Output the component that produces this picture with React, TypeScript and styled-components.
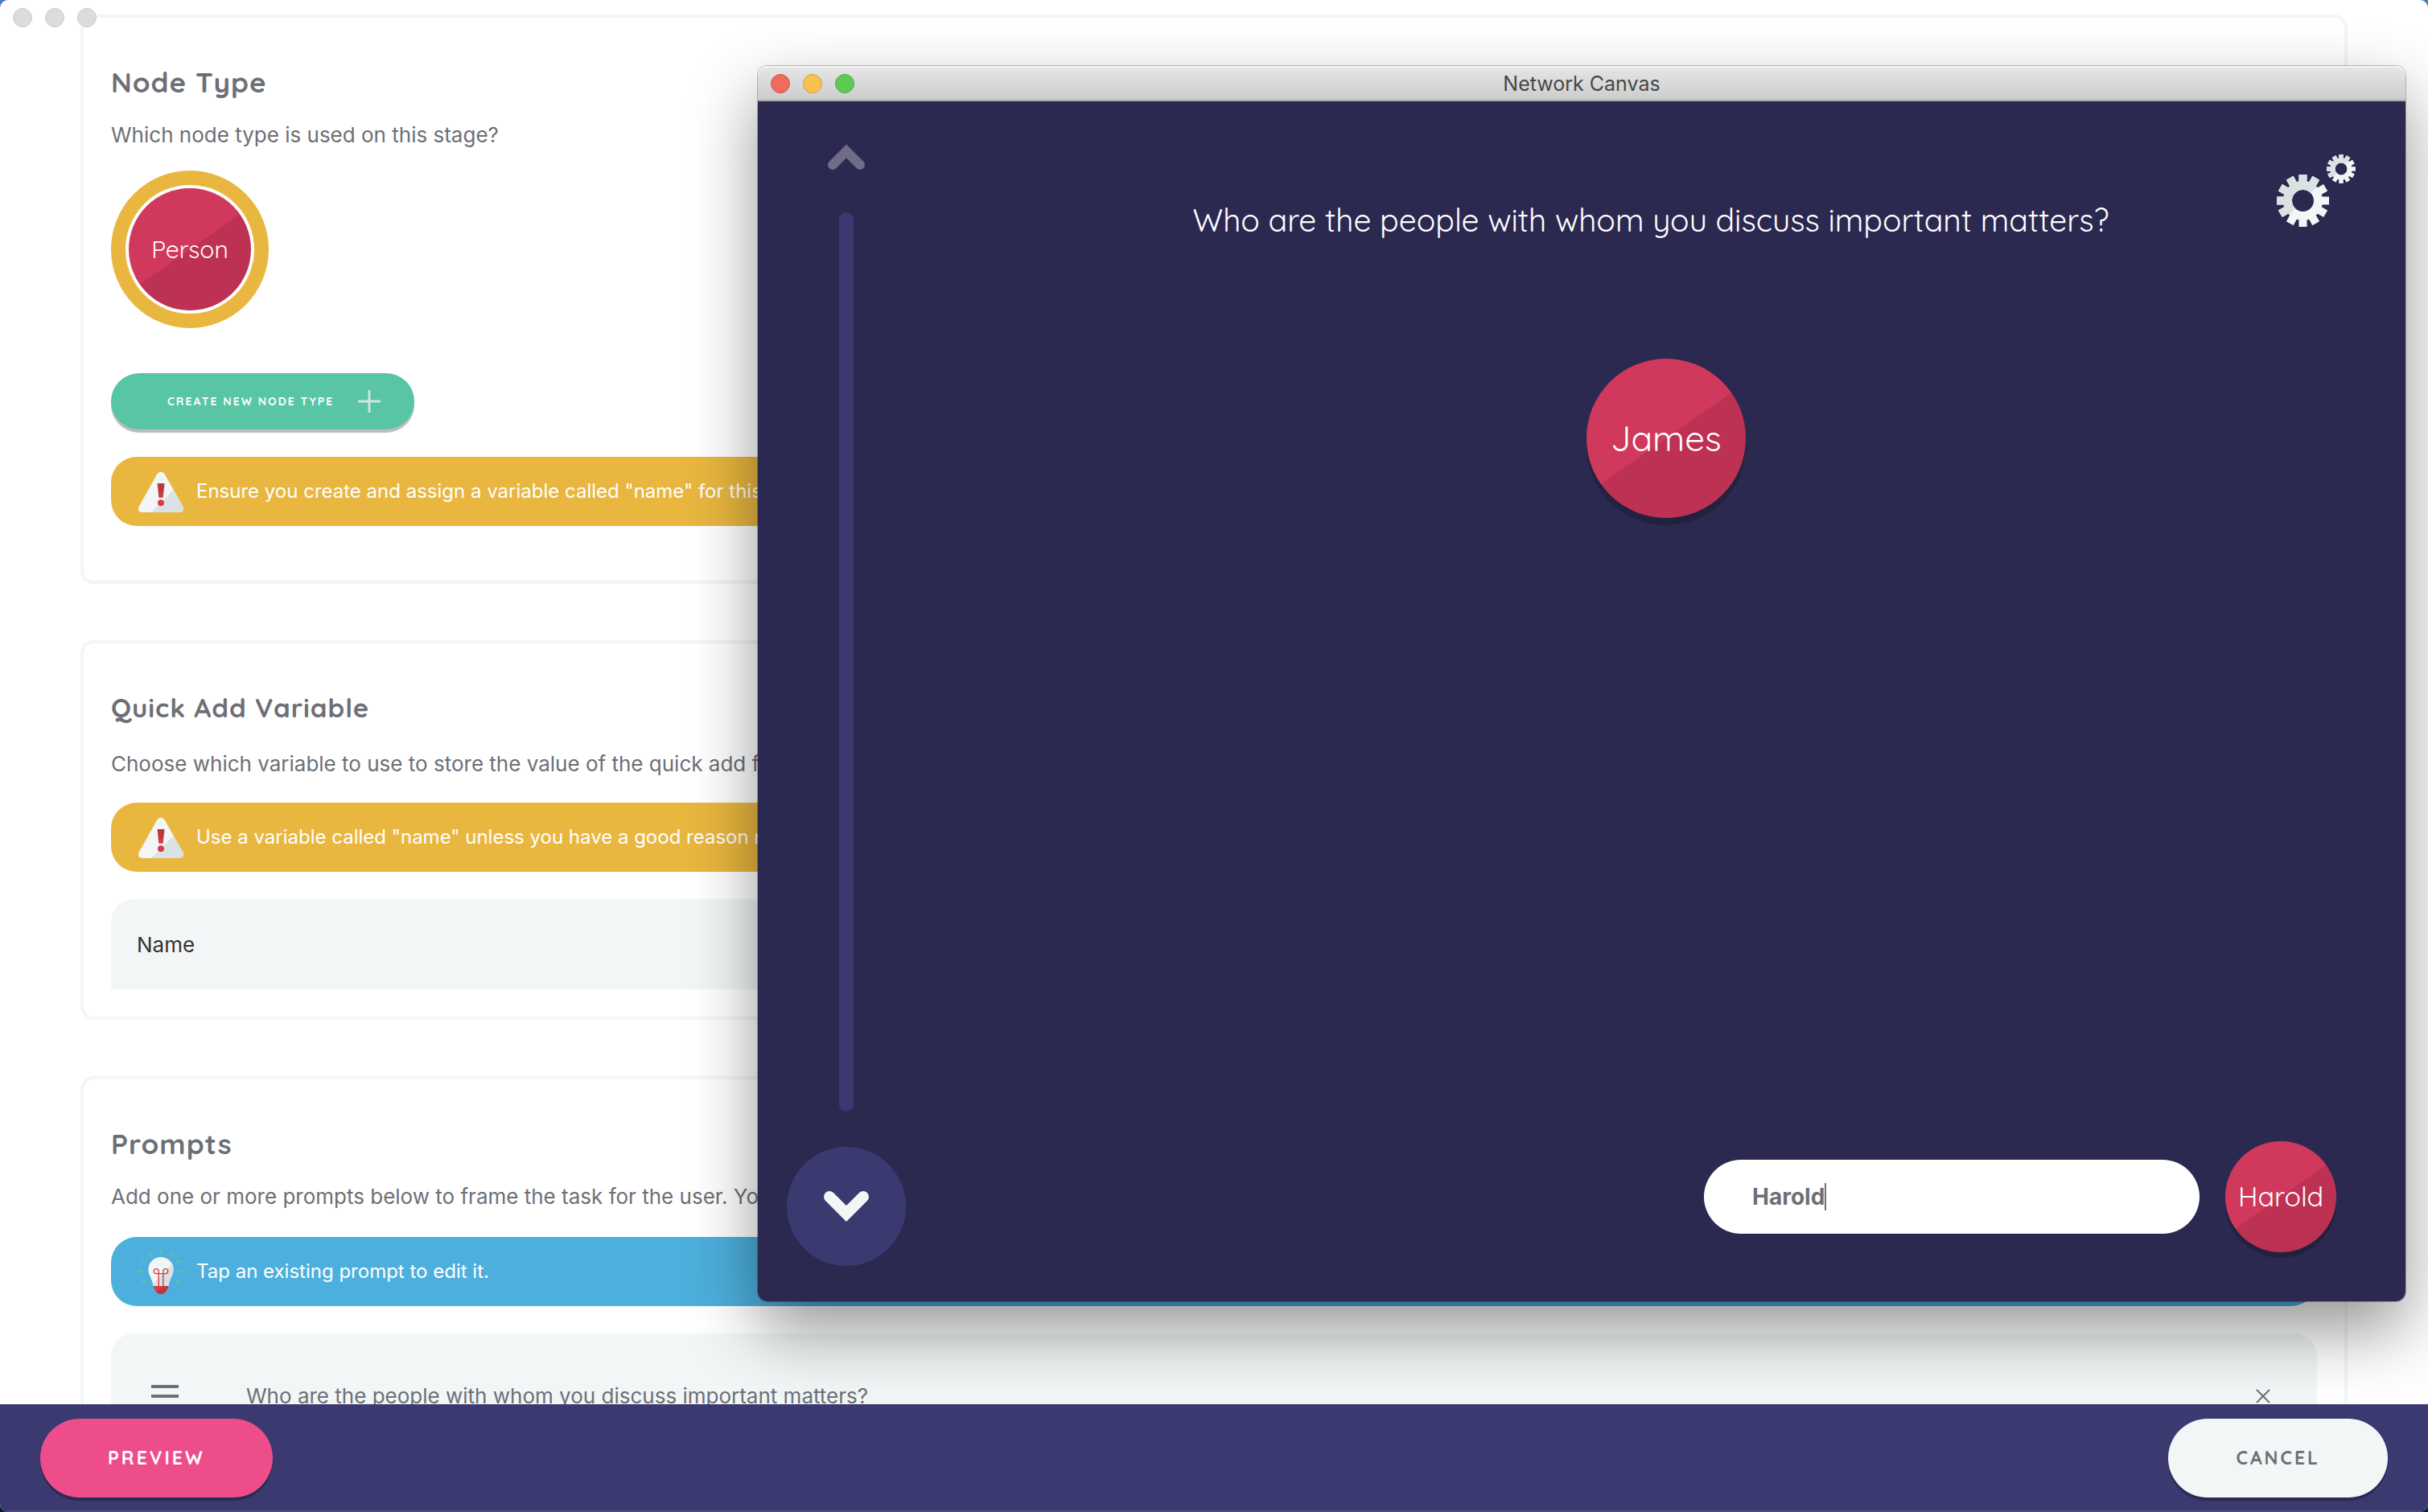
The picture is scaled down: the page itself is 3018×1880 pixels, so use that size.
import React, { useState } from 'react';
import styled, { createGlobalStyle } from 'styled-components';

const body = `Inter, "Liberation Sans", sans-serif`;
const display = `Quicksand, Lato, sans-serif`;

const color = {
  text: '#6d6f76',
  platinum: '#f2f6f7',
  platinumDark: '#dbe2e4',
  mustard: '#e9b73f',
  sky: '#4dafdd',
  green: '#58c5a4',
  pink: '#ed4d8a',
  navy: '#3b3a70',
  navyDark: '#2c2951',
  red: '#d63d47',
  redDark: '#bf363e',
};

const GlobalStyle = createGlobalStyle`
  *, *::before, *::after { box-sizing: border-box; }
  body {
    margin: 0;
    background: linear-gradient(#4a7db8, #0a1a30);
    color: ${color.text};
    font-family: ${body};
    font-size: 26px;
    line-height: 40px;
  }
  h1, h2, p, ul { margin: 0; padding: 0; font-weight: inherit; }
  button, input { font: inherit; color: inherit; border: 0; padding: 0; background: none; outline: none; }
  button { cursor: pointer; }
  svg { display: block; flex: none; }
`;

const AppWindow = styled.div`
  position: relative;
  display: flex;
  flex-direction: column;
  height: 100vh;
  overflow: hidden;
  border-radius: 10px;
  background: #fff;
`;

const Lights = styled.div`
  display: flex;
  gap: 16px;
`;

const Light = styled.button<{ $fill: string; $edge: string }>`
  width: 24px;
  height: 24px;
  border: 1px solid ${(p) => p.$edge};
  border-radius: 50%;
  background: ${(p) => p.$fill};
`;

const IdleLights = styled(Lights)`
  position: absolute;
  z-index: 1;
  top: 10px;
  left: 16px;
`;

const Main = styled.main`
  display: flex;
  flex: 1;
  flex-direction: column;
  gap: 70px;
  min-height: 0;
  overflow: hidden;
  padding: 18px 100px 0;
`;

const Card = styled.section<{ $foot?: number }>`
  display: flex;
  flex: none;
  flex-direction: column;
  padding: 34px 34px ${(p) => p.$foot ?? 34}px;
  border: 4px solid ${color.platinum};
  border-radius: 16px;
`;

const Heading = styled.h2<{ $size?: number }>`
  margin-top: 24px;
  font: 700 ${(p) => p.$size ?? 35}px/44px ${display};
  letter-spacing: 1px;
`;

const Intro = styled.p<{ $before?: number; $after?: number }>`
  margin: ${(p) => p.$before ?? 24}px 0 ${(p) => p.$after ?? 24}px;
`;

const Node = styled.span<{ $size: number; $text: number; $drop?: number }>`
  display: flex;
  align-items: center;
  justify-content: center;
  width: ${(p) => p.$size}px;
  height: ${(p) => p.$size}px;
  border-radius: 50%;
  background: linear-gradient(145deg, #d0395c 50%, #bd3153 50%);
  box-shadow: 0 ${(p) => p.$drop ?? 0}px 0 #23213f;
  color: #fff;
  font-family: ${display};
  font-size: ${(p) => p.$text}px;
`;

const NodeChoice = styled.button`
  align-self: flex-start;
  padding: 4px;
  border: 18px solid ${color.mustard};
  border-radius: 50%;
`;

const CreateButton = styled.button`
  display: flex;
  align-items: center;
  align-self: flex-start;
  gap: 30px;
  height: 70px;
  margin: 56px 0 34px;
  padding: 0 42px 0 70px;
  border-radius: 35px;
  background: ${color.green};
  box-shadow: 0 4px 0 #bdbdbd;
  color: #fff;
  font: 700 14px/20px ${display};
  letter-spacing: 2px;
  text-transform: uppercase;
`;

const Tip = styled.div<{ $tone: string }>`
  display: flex;
  flex: none;
  align-items: center;
  gap: 16px;
  height: 86px;
  padding: 0 34px;
  border-radius: 32px;
  background: ${(p) => p.$tone};
  color: #fff;
  font-size: 24px;
`;

const VariableInput = styled.input`
  width: 100%;
  height: 112px;
  margin-top: 34px;
  padding: 0 32px;
  border-radius: 28px 28px 0 0;
  background: ${color.platinum};
  color: #333;
`;

const PromptList = styled.ul`
  margin-top: 34px;
  border-radius: 28px;
  background: ${color.platinum};
  list-style: none;
`;

const PromptRow = styled.li`
  display: flex;
  align-items: center;
  height: 156px;
  padding: 0 58px 0 50px;
`;

const PromptText = styled.button`
  flex: 1;
  margin-left: 84px;
  text-align: left;
`;

const Footer = styled.footer`
  display: flex;
  align-items: center;
  justify-content: space-between;
  flex: none;
  height: 134px;
  padding: 0 50px;
  background: ${color.navy};
  box-shadow: inset 0 -2px 0 #4b4a7e;
`;

const PillButton = styled.button<{ $fill: string; $ink: string }>`
  height: 98px;
  padding: 0 84px;
  border-radius: 49px;
  background: ${(p) => p.$fill};
  box-shadow: 0 4px 0 #2a2a55;
  color: ${(p) => p.$ink};
  font: 700 23px/28px ${display};
  letter-spacing: 3px;
  text-transform: uppercase;
`;

const PreviewWindow = styled.div`
  position: absolute;
  z-index: 2;
  top: 82px;
  right: 28px;
  bottom: 262px;
  left: 942px;
  display: flex;
  flex-direction: column;
  border-radius: 12px;
  box-shadow: 0 0 0 1px rgba(0, 0, 0, 0.25), 0 36px 84px rgba(0, 0, 0, 0.42);
`;

const TitleBar = styled.header`
  display: grid;
  grid-template-columns: 1fr auto 1fr;
  align-items: center;
  height: 44px;
  padding: 2px 16px 0;
  border-bottom: 2px solid #adadad;
  border-radius: 12px 12px 0 0;
  background: linear-gradient(#e6e6e6, #cdcdcd);
  box-shadow: inset 0 2px 0 #f4f4f4;
  color: #474747;
  font-size: 25px;
`;

const Interview = styled.div`
  position: relative;
  display: flex;
  flex: 1;
  min-height: 0;
  border-radius: 0 0 12px 12px;
  background: ${color.navyDark};
  color: #fff;
`;

const Timeline = styled.nav`
  display: flex;
  flex-direction: column;
  align-items: center;
  padding: 54px 0 44px 36px;
`;

const Track = styled.div`
  flex: 1;
  width: 18px;
  margin: 53px 0 44px;
  border-radius: 9px;
  background: ${color.navy};
`;

const NextButton = styled.button`
  display: flex;
  align-items: center;
  justify-content: center;
  width: 148px;
  height: 148px;
  border-radius: 50%;
  background: ${color.navy};
`;

const Stage = styled.div`
  display: flex;
  flex: 1;
  flex-direction: column;
  align-items: center;
  margin-right: 12px;
  padding: 124px 0 61px;
`;

const Question = styled.h1`
  font: 400 39px/48px ${display};
`;

const NodeList = styled.ul`
  flex: 1;
  margin-top: 148px;
  padding-left: 38px;
  list-style: none;
`;

const QuickAdd = styled.form`
  display: flex;
  align-items: center;
  align-self: flex-end;
  gap: 32px;
  margin-right: 74px;
`;

const QuickField = styled.label`
  display: flex;
  align-items: center;
  width: 616px;
  height: 92px;
  padding: 0 60px;
  border-radius: 46px;
  background: #fff;
  color: ${color.text};
  font-size: 28px;
  font-weight: 700;
  cursor: text;
`;

const QuickInput = styled.input`
  field-sizing: content;
  caret-color: transparent;
`;

const Caret = styled.span`
  width: 2px;
  height: 34px;
  background: ${color.text};
`;

const SettingsButton = styled.button`
  position: absolute;
  top: 66px;
  right: 62px;
`;

const WarningIcon = () => (
  <svg width="56" height="56" viewBox="0 0 56 56" aria-hidden="true">
    <clipPath id="sign">
      <path d="M23.4 6.2Q28 .8 32.6 6.2L55.2 46.6Q58 53.4 51 54H5Q-2 53.4.8 46.6Z" />
    </clipPath>
    <g clipPath="url(#sign)">
      <path d="M0 0h56v56H0z" fill={color.platinum} />
      <path d="M44 26L16 54v2h42V26z" fill={color.platinumDark} />
    </g>
    <path d="M23.6 18h8.8l-1.8 17.6h-5.2z" fill={color.redDark} />
    <path d="M32.4 18l-1.8 17.6h-5.2l-.2-2.4L32 26z" fill={color.red} />
    <circle cx="28" cy="42.3" r="4" fill={color.red} />
  </svg>
);

const BulbIcon = () => (
  <svg width="56" height="56" viewBox="0 0 56 56" fill="none" aria-hidden="true">
    <path
      d="M28 0v6M13.8 3.8l3 5.2M42.2 3.8l-3 5.2M3.8 13.8L9 16.8M52.2 13.8L47 16.8M0 28h6M50 28h6M3.8 42.2L9 39.2M52.2 42.2L47 39.2"
      stroke={color.green}
      strokeWidth="2.4"
    />
    <clipPath id="glass">
      <path d="M28 10a15.6 15.6 0 0 1 15.6 15.6C43.6 33 38 38 37.5 46h-19C18 38 12.4 33 12.4 25.6A15.6 15.6 0 0 1 28 10z" />
    </clipPath>
    <g clipPath="url(#glass)">
      <path d="M12 10h32v36H12z" fill={color.platinum} />
      <path d="M46 15L16 45v3h30V15z" fill={color.platinumDark} />
    </g>
    <path
      d="M25.2 46V28a3 3 0 1 0-3 2.6h11.6a3 3 0 1 0-3-2.6v18"
      stroke={color.red}
      strokeWidth="1.4"
    />
    <path d="M18.6 46h18.8q0 2.5-1.6 3.2c-1 4.5-4 6.8-7.8 6.8s-6.8-2.3-7.8-6.8q-1.6-.7-1.6-3.2z" fill={color.red} />
    <path d="M32 46h5.4q0 2.5-1.6 3.2c-1 4.5-4 6.8-7.8 6.8-2 0-3.8-.8-5.2-2z" fill={color.redDark} />
  </svg>
);

const Gear = ({ x, y, scale }: { x: number; y: number; scale: number }) => {
  const id = `gear${x}`;
  return (
    <g transform={`translate(${x} ${y}) scale(${scale})`}>
      <clipPath id={id}>
        <path d="M-40-40H40L-40 40z" />
      </clipPath>
      {[color.platinum, color.platinumDark].map((tone, half) => (
        <g key={tone} clipPath={half ? `url(#${id})` : undefined}>
          <circle r="19" stroke={tone} strokeWidth="11" fill="none" />
          {Array.from({ length: 12 }, (_, i) => (
            <path key={i} d="M-5-32.5H5V-22H-5z" fill={tone} transform={`rotate(${i * 30})`} />
          ))}
        </g>
      ))}
    </g>
  );
};

export default function App() {
  const [name, setName] = useState('Harold');
  const [variable, setVariable] = useState('Name');

  return (
    <>
      <GlobalStyle />
      <AppWindow>
        <IdleLights>
          {['Close', 'Minimise', 'Zoom'].map((label) => (
            <Light key={label} $fill="#dcdcdc" $edge="#cbcbcb" aria-label={`${label} editor`} />
          ))}
        </IdleLights>

        <Main>
          <Card $foot={68}>
            <Heading>Node Type</Heading>
            <Intro>Which node type is used on this stage?</Intro>
            <NodeChoice>
              <Node $size={152} $text={30}>Person</Node>
            </NodeChoice>
            <CreateButton>
              Create new node type
              <svg width="28" height="28" viewBox="0 0 28 28" aria-hidden="true">
                <path d="M14 0v28M0 14h28" stroke="#d3e3e0" strokeWidth="3" />
              </svg>
            </CreateButton>
            <Tip $tone={color.mustard}>
              <WarningIcon />
              <p>Ensure you create and assign a variable called "name" for this node type.</p>
            </Tip>
          </Card>

          <Card>
            <Heading $size={33}>Quick Add Variable</Heading>
            <Intro $before={28} $after={28}>
              Choose which variable to use to store the value of the quick add form.
            </Intro>
            <Tip $tone={color.mustard}>
              <WarningIcon />
              <p>Use a variable called "name" unless you have a good reason not to.</p>
            </Tip>
            <VariableInput
              aria-label="Variable"
              value={variable}
              onChange={(e) => setVariable(e.target.value)}
            />
          </Card>

          <Card>
            <Heading>Prompts</Heading>
            <Intro $after={30}>
              Add one or more prompts below to frame the task for the user. You can reorder the prompts.
            </Intro>
            <Tip $tone={color.sky}>
              <BulbIcon />
              <p>Tap an existing prompt to edit it.</p>
            </Tip>
            <PromptList>
              <PromptRow>
                <button aria-label="Reorder prompt">
                  <svg width="34" height="28" viewBox="0 0 34 28">
                    <path d="M0 2h34M0 14h34M0 26h34" stroke={color.text} strokeWidth="4" />
                  </svg>
                </button>
                <PromptText>Who are the people with whom you discuss important matters?</PromptText>
                <button aria-label="Remove prompt">
                  <svg width="18" height="18" viewBox="0 0 18 18">
                    <path d="M1 1l16 16M17 1L1 17" stroke={color.text} strokeWidth="2" />
                  </svg>
                </button>
              </PromptRow>
            </PromptList>
          </Card>
        </Main>

        <Footer>
          <PillButton $fill={color.pink} $ink="#fff">Preview</PillButton>
          <PillButton $fill={color.platinum} $ink={color.text}>Cancel</PillButton>
        </Footer>

        <PreviewWindow>
          <TitleBar>
            <Lights>
              <Light $fill="#ee6b5f" $edge="#d2564b" aria-label="Close" />
              <Light $fill="#f6c14f" $edge="#d8a03f" aria-label="Minimise" />
              <Light $fill="#60c956" $edge="#4fab44" aria-label="Zoom" />
            </Lights>
            <span>Network Canvas</span>
          </TitleBar>
          <Interview>
            <Timeline>
              <button aria-label="Previous prompt">
                <svg width="46" height="31" viewBox="0 0 46 31" fill="none">
                  <path d="M6 25L23 8L40 25" stroke="#6f6b88" strokeWidth="12" strokeLinecap="round" />
                </svg>
              </button>
              <Track />
              <NextButton aria-label="Next prompt">
                <svg width="56" height="38" viewBox="0 0 56 38" fill="none">
                  <path d="M7 7L28 28L49 7" stroke={color.platinum} strokeWidth="14" strokeLinecap="round" />
                </svg>
              </NextButton>
            </Timeline>
            <Stage>
              <Question>Who are the people with whom you discuss important matters?</Question>
              <NodeList>
                <li>
                  <Node $size={198} $text={44} $drop={9}>James</Node>
                </li>
              </NodeList>
              <QuickAdd onSubmit={(e) => e.preventDefault()}>
                <QuickField>
                  <QuickInput
                    aria-label="Name"
                    value={name}
                    onChange={(e) => setName(e.target.value)}
                  />
                  <Caret />
                </QuickField>
                <Node $size={138} $text={34} $drop={7}>{name}</Node>
              </QuickAdd>
            </Stage>
            <SettingsButton aria-label="Settings">
              <svg width="98" height="90" viewBox="0 0 98 90">
                <Gear x={32.5} y={57.5} scale={1} />
                <Gear x={80} y={18} scale={0.55} />
              </svg>
            </SettingsButton>
          </Interview>
        </PreviewWindow>
      </AppWindow>
    </>
  );
}
